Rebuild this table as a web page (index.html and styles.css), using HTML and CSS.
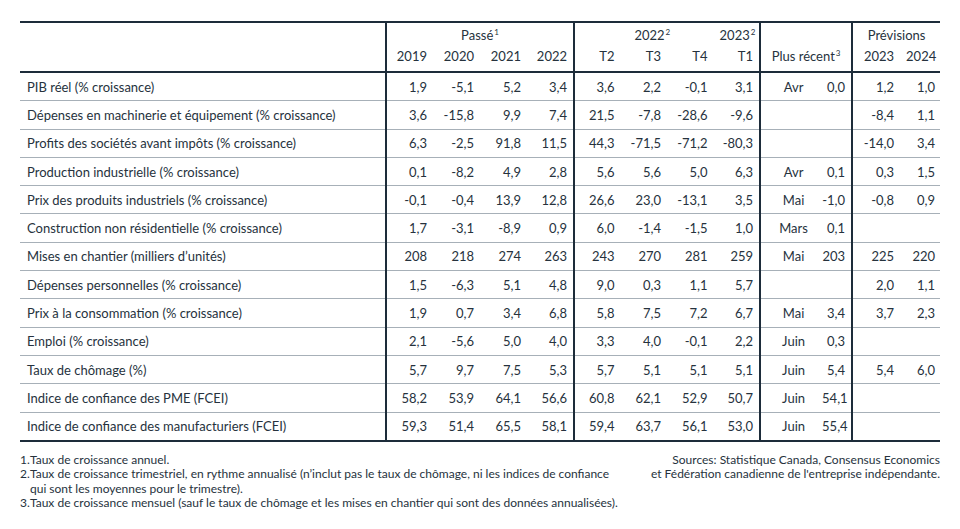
FILE: index.html
```html
<!DOCTYPE html>
<html lang="fr">
<head>
<meta charset="utf-8">
<title>Indicateurs économiques</title>
<link rel="stylesheet" href="styles.css">
</head>
<body>
<div class="page">
<table class="data">
  <colgroup>
    <col class="c-label">
    <col class="c-y"><col class="c-y"><col class="c-y"><col class="c-y">
    <col class="c-q"><col class="c-q"><col class="c-q"><col class="c-q">
    <col class="c-m"><col class="c-mv">
    <col class="c-p1"><col class="c-p2">
  </colgroup>
  <thead>
    <tr class="h1">
      <th class="lab sep" rowspan="2"></th>
      <th colspan="4" class="center sep">Passé<sup>1</sup></th>
      <th colspan="3" class="y2022">2022<sup>2</sup></th>
      <th class="num sep">2023<sup>2</sup></th>
      <th colspan="2" rowspan="2" class="recent sep">Plus récent<sup>3</sup></th>
      <th colspan="2" class="center">Prévisions</th>
    </tr>
    <tr class="h2">
      <th class="num">2019</th><th class="num">2020</th><th class="num">2021</th><th class="num sep">2022</th>
      <th class="num">T2</th><th class="num">T3</th><th class="num">T4</th><th class="num sep">T1</th>
      <th class="num">2023</th><th class="num">2024</th>
    </tr>
  </thead>
  <tbody>
    <tr><td class="lab sep">PIB réel (% croissance)</td><td class="num">1,9</td><td class="num">-5,1</td><td class="num">5,2</td><td class="num sep">3,4</td><td class="num">3,6</td><td class="num">2,2</td><td class="num">-0,1</td><td class="num sep">3,1</td><td class="mo">Avr</td><td class="num sep">0,0</td><td class="num">1,2</td><td class="num">1,0</td></tr>
    <tr><td class="lab sep">Dépenses en machinerie et équipement (% croissance)</td><td class="num">3,6</td><td class="num">-15,8</td><td class="num">9,9</td><td class="num sep">7,4</td><td class="num">21,5</td><td class="num">-7,8</td><td class="num">-28,6</td><td class="num sep">-9,6</td><td class="mo"></td><td class="num sep"></td><td class="num">-8,4</td><td class="num">1,1</td></tr>
    <tr><td class="lab sep">Profits des sociétés avant impôts (% croissance)</td><td class="num">6,3</td><td class="num">-2,5</td><td class="num">91,8</td><td class="num sep">11,5</td><td class="num">44,3</td><td class="num">-71,5</td><td class="num">-71,2</td><td class="num sep">-80,3</td><td class="mo"></td><td class="num sep"></td><td class="num">-14,0</td><td class="num">3,4</td></tr>
    <tr><td class="lab sep">Production industrielle (% croissance)</td><td class="num">0,1</td><td class="num">-8,2</td><td class="num">4,9</td><td class="num sep">2,8</td><td class="num">5,6</td><td class="num">5,6</td><td class="num">5,0</td><td class="num sep">6,3</td><td class="mo">Avr</td><td class="num sep">0,1</td><td class="num">0,3</td><td class="num">1,5</td></tr>
    <tr><td class="lab sep">Prix des produits industriels (% croissance)</td><td class="num">-0,1</td><td class="num">-0,4</td><td class="num">13,9</td><td class="num sep">12,8</td><td class="num">26,6</td><td class="num">23,0</td><td class="num">-13,1</td><td class="num sep">3,5</td><td class="mo">Mai</td><td class="num sep">-1,0</td><td class="num">-0,8</td><td class="num">0,9</td></tr>
    <tr><td class="lab sep">Construction non résidentielle (% croissance)</td><td class="num">1,7</td><td class="num">-3,1</td><td class="num">-8,9</td><td class="num sep">0,9</td><td class="num">6,0</td><td class="num">-1,4</td><td class="num">-1,5</td><td class="num sep">1,0</td><td class="mo">Mars</td><td class="num sep">0,1</td><td class="num"></td><td class="num"></td></tr>
    <tr><td class="lab sep">Mises en chantier (milliers d’unités)</td><td class="num">208</td><td class="num">218</td><td class="num">274</td><td class="num sep">263</td><td class="num">243</td><td class="num">270</td><td class="num">281</td><td class="num sep">259</td><td class="mo">Mai</td><td class="num sep">203</td><td class="num">225</td><td class="num">220</td></tr>
    <tr><td class="lab sep">Dépenses personnelles (% croissance)</td><td class="num">1,5</td><td class="num">-6,3</td><td class="num">5,1</td><td class="num sep">4,8</td><td class="num">9,0</td><td class="num">0,3</td><td class="num">1,1</td><td class="num sep">5,7</td><td class="mo"></td><td class="num sep"></td><td class="num">2,0</td><td class="num">1,1</td></tr>
    <tr><td class="lab sep">Prix à la consommation (% croissance)</td><td class="num">1,9</td><td class="num">0,7</td><td class="num">3,4</td><td class="num sep">6,8</td><td class="num">5,8</td><td class="num">7,5</td><td class="num">7,2</td><td class="num sep">6,7</td><td class="mo">Mai</td><td class="num sep">3,4</td><td class="num">3,7</td><td class="num">2,3</td></tr>
    <tr><td class="lab sep">Emploi (% croissance)</td><td class="num">2,1</td><td class="num">-5,6</td><td class="num">5,0</td><td class="num sep">4,0</td><td class="num">3,3</td><td class="num">4,0</td><td class="num">-0,1</td><td class="num sep">2,2</td><td class="mo">Juin</td><td class="num sep">0,3</td><td class="num"></td><td class="num"></td></tr>
    <tr><td class="lab sep">Taux de chômage (%)</td><td class="num">5,7</td><td class="num">9,7</td><td class="num">7,5</td><td class="num sep">5,3</td><td class="num">5,7</td><td class="num">5,1</td><td class="num">5,1</td><td class="num sep">5,1</td><td class="mo">Juin</td><td class="num sep">5,4</td><td class="num">5,4</td><td class="num">6,0</td></tr>
    <tr><td class="lab sep">Indice de confiance des PME (FCEI)</td><td class="num">58,2</td><td class="num">53,9</td><td class="num">64,1</td><td class="num sep">56,6</td><td class="num">60,8</td><td class="num">62,1</td><td class="num">52,9</td><td class="num sep">50,7</td><td class="mo">Juin</td><td class="num sep">54,1</td><td class="num"></td><td class="num"></td></tr>
    <tr><td class="lab sep">Indice de confiance des manufacturiers (FCEI)</td><td class="num">59,3</td><td class="num">51,4</td><td class="num">65,5</td><td class="num sep">58,1</td><td class="num">59,4</td><td class="num">63,7</td><td class="num">56,1</td><td class="num sep">53,0</td><td class="mo">Juin</td><td class="num sep">55,4</td><td class="num"></td><td class="num"></td></tr>
  </tbody>
</table>
<div class="foot">
  <ol class="notes">
    <li><span class="n">1.</span>Taux de croissance annuel.</li>
    <li><span class="n">2.</span>Taux de croissance trimestriel, en rythme annualisé (n’inclut pas le taux de chômage, ni les indices de confiance<br>qui sont les moyennes pour le trimestre).</li>
    <li><span class="n">3.</span>Taux de croissance mensuel (sauf le taux de chômage et les mises en chantier qui sont des données annualisées).</li>
  </ol>
  <p class="sources">Sources: Statistique Canada, Consensus Economics<br>et Fédération canadienne de l'entreprise indépendante.</p>
</div>
</div>
</body>
</html>
```

FILE: styles.css
```css
html, body {
  margin: 0;
  padding: 0;
  background: #ffffff;
}
body {
  font-family: Lato, "Noto Sans", "Liberation Sans", sans-serif;
  color: #26323d;
}
.page {
  padding: 21px 20px 0 20px;
}
.data {
  width: 920px;
  table-layout: fixed;
  border-collapse: collapse;
  font-size: 13px;
  border-top: 2px solid #1d2c3a;
  border-bottom: 2px solid #1d2c3a;
}
.c-label { width: 366px; }
.c-y { width: 47px; }
.c-q { width: 46.5px; }
.c-m { width: 56px; }
.c-mv { width: 36px; }
.c-p1 { width: 48px; }
.c-p2 { width: 40px; }

th {
  font-weight: 400;
  padding: 0 6px;
  line-height: 16px;
  white-space: nowrap;
}
.h1 th { vertical-align: middle; padding-top: 4px; padding-bottom: 3px; }
.h2 th { vertical-align: top; padding-top: 2px; padding-bottom: 7px; }
thead tr.h2 { border-bottom: 2px solid #1d2c3a; }
th sup {
  font-size: 8px;
  line-height: 0;
  vertical-align: 5px;
  margin-left: 1px;
}
.center { text-align: center; }
.y2022 { text-align: center; padding-left: 22px; }
th.recent { vertical-align: bottom; text-align: center; padding-bottom: 7px; }

td {
  height: 27.3px;
  padding: 0 6px;
  border-bottom: 1px solid #a7b0b8;
  white-space: nowrap;
}
tbody tr:last-child td { border-bottom: none; }
.lab { text-align: left; padding-left: 7px; }
.num { text-align: right; }
td.num { padding-right: 6px; }
td.num:last-child, th.num:last-child { padding-right: 5px; }
.mo { text-align: center; padding-left: 10px; padding-right: 0; }
.sep { border-right: 2px solid #1d2c3a; }

.foot {
  display: flex;
  justify-content: space-between;
  align-items: flex-start;
  margin-top: 11px;
  font-size: 12px;
  line-height: 14.4px;
}
.notes {
  list-style: none;
  margin: 0;
  padding: 0 0 0 10px;
}
.notes li { position: relative; }
.notes .n {
  position: absolute;
  left: -10px;
}
.sources {
  margin: 0;
  text-align: right;
}
```
